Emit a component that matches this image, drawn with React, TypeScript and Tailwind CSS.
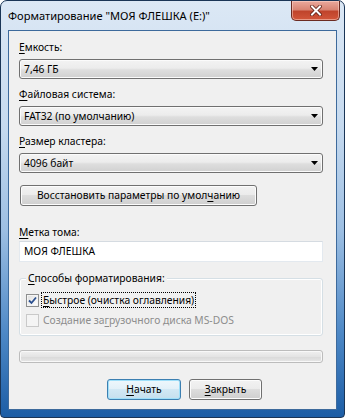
import React from "react";

const U = ({ children }: { children: React.ReactNode }) => (
  <span className="underline underline-offset-[2px] decoration-[1px]">{children}</span>
);

function Combo({ children }: { children: React.ReactNode }) {
  return (
    <div className="h-[20px] w-full rounded-[3px] border border-[#707070] bg-[linear-gradient(to_bottom,#f3f3f3_0%,#ececec_45%,#dedede_55%,#d0d0d0_100%)] shadow-[inset_0_0_0_1px_#fbfbfb] flex items-center justify-between pl-[4px] pr-[4px]">
      <span className="leading-[15px]">{children}</span>
      <svg width="7" height="4" viewBox="0 0 7 4">
        <path d="M0 0H7L3.5 4Z" fill="#000" />
      </svg>
    </div>
  );
}

const btnBase =
  "h-[21px] rounded-[3px] flex items-center justify-center leading-[15px]";
const greyFill =
  " bg-[linear-gradient(to_bottom,#f2f2f2_0%,#ebebeb_50%,#dddddd_50%,#cfcfcf_100%)]";
const blueFill =
  " bg-[linear-gradient(to_bottom,#eef7fc_0%,#e2f0f8_50%,#d2e8f4_50%,#c5dfee_100%)]";

function CheckBox({ checked, disabled }: { checked?: boolean; disabled?: boolean }) {
  return (
    <div
      className={
        "w-[13px] h-[13px] border flex items-center justify-center shrink-0 " +
        (disabled
          ? "border-[#c9c9c9] bg-[#f4f4f4]"
          : "border-[#8e8f8f] bg-[linear-gradient(135deg,#dcdcdc_0%,#f4f4f4_60%,#ffffff_100%)] shadow-[inset_0_0_0_1px_#f4f4f4]")
      }
    >
      {checked && (
        <svg width="9" height="9" viewBox="0 0 9 9">
          <path d="M1 4.5L3.5 7L8 1.5" stroke="#2a4f8f" strokeWidth="1.8" fill="none" />
        </svg>
      )}
    </div>
  );
}

export default function App() {
  return (
    <div className="w-[345px] h-[418px] bg-white font-['Noto_Sans',sans-serif] text-[10.3px] text-black">
      <div className="w-full h-full rounded-t-[7px] rounded-b-[4px] border border-[#1a3556] bg-[linear-gradient(to_bottom,#dce8f5_0%,#c6daef_30%,#9dbfe3_55%,#4d88c6_80%,#1c5da5_100%)] flex flex-col px-[7px] pb-[7px]">
        <div className="h-[29px] flex items-start justify-between">
          <div className="pt-[6px] text-[11.1px] leading-[17px] text-black">
            Форматирование "МОЯ ФЛЕШКА (E:)"
          </div>
          <div className="-mr-[3px] w-[49px] h-[20px] rounded-b-[5px] border border-t-0 border-[#6b2b22] bg-[linear-gradient(to_bottom,#eaa99d_0%,#d98574_45%,#c0442c_55%,#d2563a_100%)] shadow-[inset_0_0_0_1px_rgba(255,220,210,0.5)] flex items-center justify-center">
            <svg width="12" height="11" viewBox="0 0 12 11">
              <path d="M2 1.5L10 9.5M10 1.5L2 9.5" stroke="#5a1a10" strokeWidth="3.6" strokeLinecap="square" />
              <path d="M2 1.5L10 9.5M10 1.5L2 9.5" stroke="#ffffff" strokeWidth="2" strokeLinecap="square" />
            </svg>
          </div>
        </div>
        <div className="flex-1 border border-[#3d6a9c] bg-[#f0f0f0] pl-[10px] pr-[13px] pt-[9px] flex flex-col">
          <div className="leading-[15px]">
            <U>Е</U>мкость:
          </div>
          <div className="mt-[4px]">
            <Combo>7,46 ГБ</Combo>
          </div>
          <div className="leading-[15px] mt-[8px]">
            <U>Ф</U>айловая система:
          </div>
          <div className="mt-[4px]">
            <Combo>FAT32 (по умолчанию)</Combo>
          </div>
          <div className="leading-[15px] mt-[8px]">
            <U>Р</U>азмер кластера:
          </div>
          <div className="mt-[4px]">
            <Combo>4096 байт</Combo>
          </div>
          <div className={btnBase + greyFill + " mt-[12px] ml-[1px] w-[237px] border border-[#707070] shadow-[inset_0_0_0_1px_#fcfcfc]"}>
            <span>
              Восстановить параметры по умол<U>ч</U>анию
            </span>
          </div>
          <div className="leading-[15px] mt-[19px]">
            <U>М</U>етка тома:
          </div>
          <div className="mt-[1px] h-[21px] w-full bg-white border border-[#e3e9ef] border-t-[#d5dbe1] flex items-center pl-[4px] leading-[15px]">
            МОЯ ФЛЕШКА
          </div>
          <div className="relative mt-[16px] h-[58px] w-full rounded-[3px] border border-[#d5dfe5] shadow-[inset_0_0_0_1px_#ffffff]">
            <div className="absolute -top-[8px] left-[6px] px-[2px] bg-[#f0f0f0] leading-[15px]">
              <U>С</U>пособы форматирования:
            </div>
            <div className="flex items-center pl-[6px] pt-[14px] gap-[3px]">
              <CheckBox checked />
              <span className="outline outline-1 outline-dotted outline-black px-[1px] leading-[14px]">
                <U>Б</U>ыстрое (очистка оглавления)
              </span>
            </div>
            <div className="flex items-center pl-[6px] mt-[6px] gap-[4px] text-[#8d8d8d]">
              <CheckBox disabled />
              <span className="leading-[14px]">
                Создание за<U>г</U>рузочного диска MS-DOS
              </span>
            </div>
          </div>
          <div className="mt-[14px] h-[13px] w-full rounded-[3px] border border-[#bcbcbc] bg-[linear-gradient(to_bottom,#f0f0f0_0%,#e4e4e4_50%,#d9d9d9_51%,#e6e6e6_100%)] shadow-[inset_0_0_0_1px_#f8f8f8]" />
          <div className="mt-[16px] flex pl-[88px] gap-[8px]">
            <div className={btnBase + blueFill + " w-[74px] border border-[#3c7fb1] shadow-[inset_0_0_0_1px_#9fdff9]"}>
              <span>
                <U>Н</U>ачать
              </span>
            </div>
            <div className={btnBase + greyFill + " w-[73px] border border-[#707070] shadow-[inset_0_0_0_1px_#fcfcfc]"}>
              <span>
                <U>З</U>акрыть
              </span>
            </div>
          </div>
        </div>
      </div>
    </div>
  );
}
